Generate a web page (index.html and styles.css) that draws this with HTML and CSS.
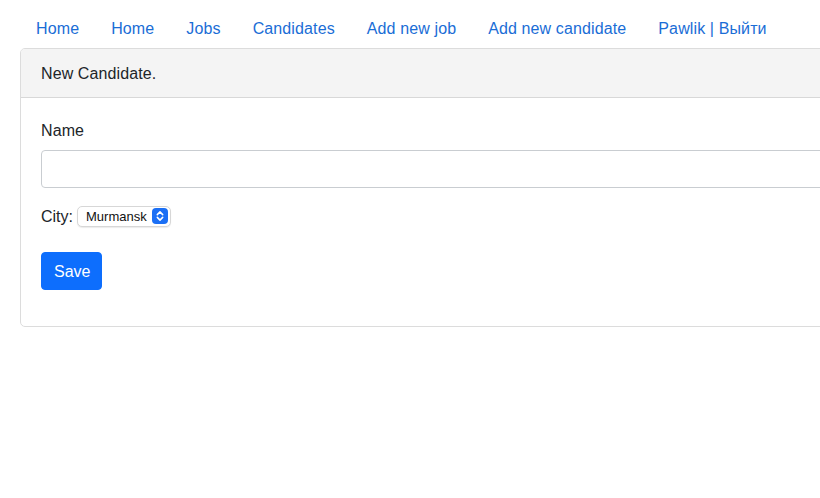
FILE: index.html
```html
<!DOCTYPE html>
<html lang="en">
<head>
<meta charset="utf-8">
<title>New Candidate</title>
<link rel="stylesheet" href="styles.css">
</head>
<body>
<div class="container">
  <nav class="nav">
    <a class="nav-link" href="#">Home</a>
    <a class="nav-link" href="#">Home</a>
    <a class="nav-link" href="#">Jobs</a>
    <a class="nav-link" href="#">Candidates</a>
    <a class="nav-link" href="#">Add new job</a>
    <a class="nav-link" href="#">Add new candidate</a>
    <a class="nav-link" href="#">Pawlik | Выйти</a>
  </nav>
  <div class="card">
    <div class="card-header">New Candidate.</div>
    <div class="card-body">
      <form class="form">
        <div class="form-group">
          <label class="label" for="name">Name</label>
          <input class="form-control" id="name" type="text">
        </div>
        <div class="form-group city-row">
          <label class="city-label" for="city">City:</label>
          <div class="select">
            <span class="select-value">Murmansk</span>
            <span class="select-arrow">
              <svg width="10" height="12" viewBox="0 0 10 12" aria-hidden="true">
                <path d="M2.3 4.6 L5 1.9 L7.7 4.6 M2.3 7.4 L5 10.1 L7.7 7.4" fill="none" stroke="#fff" stroke-width="1.5" stroke-linecap="round" stroke-linejoin="round"/>
              </svg>
            </span>
          </div>
        </div>
        <button class="btn" type="button">Save</button>
      </form>
    </div>
  </div>
</div>
</body>
</html>
```

FILE: styles.css
```css
html, body {
  margin: 0;
  padding: 0;
  overflow: hidden;
  background: #fff;
}
body {
  font-family: "Liberation Sans", Arial, sans-serif;
  font-size: 16px;
  line-height: 24px;
  color: #212529;
}
.container {
  padding: 8px 0 0 20px;
}
.nav {
  display: flex;
  height: 40px;
}
.nav-link {
  display: block;
  padding: 9px 16px 7px;
  color: #1a6dd6;
  text-decoration: none;
  white-space: nowrap;
  letter-spacing: 0.12px;
}
.card {
  width: 900px;
  border: 1px solid #dcdcdc;
  border-radius: 5px;
  background: #fff;
  overflow: hidden;
}
.card-header {
  background: #f4f4f4;
  border-bottom: 1px solid #d8d8d8;
  padding: 13px 20px 11px;
  letter-spacing: 0.1px;
}
.card-body {
  padding: 20px;
}
.form {
  margin-bottom: 16px;
}
.form-group {
  margin-bottom: 16px;
}
.label {
  display: block;
  padding-top: 1px;
  margin-bottom: 7px;
  letter-spacing: 0.1px;
}
.form-control {
  display: block;
  box-sizing: border-box;
  width: 100%;
  height: 38px;
  border: 1px solid #c9cdd1;
  border-radius: 4px;
  padding: 6px 12px;
  font: inherit;
  margin: 0;
}
.city-row {
  display: flex;
  align-items: center;
  height: 24px;
  margin-bottom: 24px;
}
.city-label {
  margin-right: 4px;
  padding-top: 1px;
}
.select {
  box-sizing: border-box;
  display: flex;
  align-items: center;
  height: 21px;
  width: 94px;
  padding: 0 2px 0 8px;
  border: 1px solid #d7d7d7;
  border-radius: 5px;
  box-shadow: 0 1px 1px rgba(0,0,0,0.08);
  background: #fff;
  font-size: 13px;
  line-height: 16px;
  color: #111;
}
.select-value {
  flex: 1;
  padding-top: 1px;
}
.select-arrow {
  width: 16px;
  height: 16px;
  border-radius: 4px;
  background: #1b6ff5;
  display: flex;
  align-items: center;
  justify-content: center;
}
.btn {
  display: block;
  box-sizing: border-box;
  height: 38px;
  width: 61px;
  padding: 7px 12px 5px;
  border: 1px solid #0d6efd;
  border-radius: 4px;
  background: #0d6efd;
  color: #fff;
  font: inherit;
  cursor: pointer;
}
```
